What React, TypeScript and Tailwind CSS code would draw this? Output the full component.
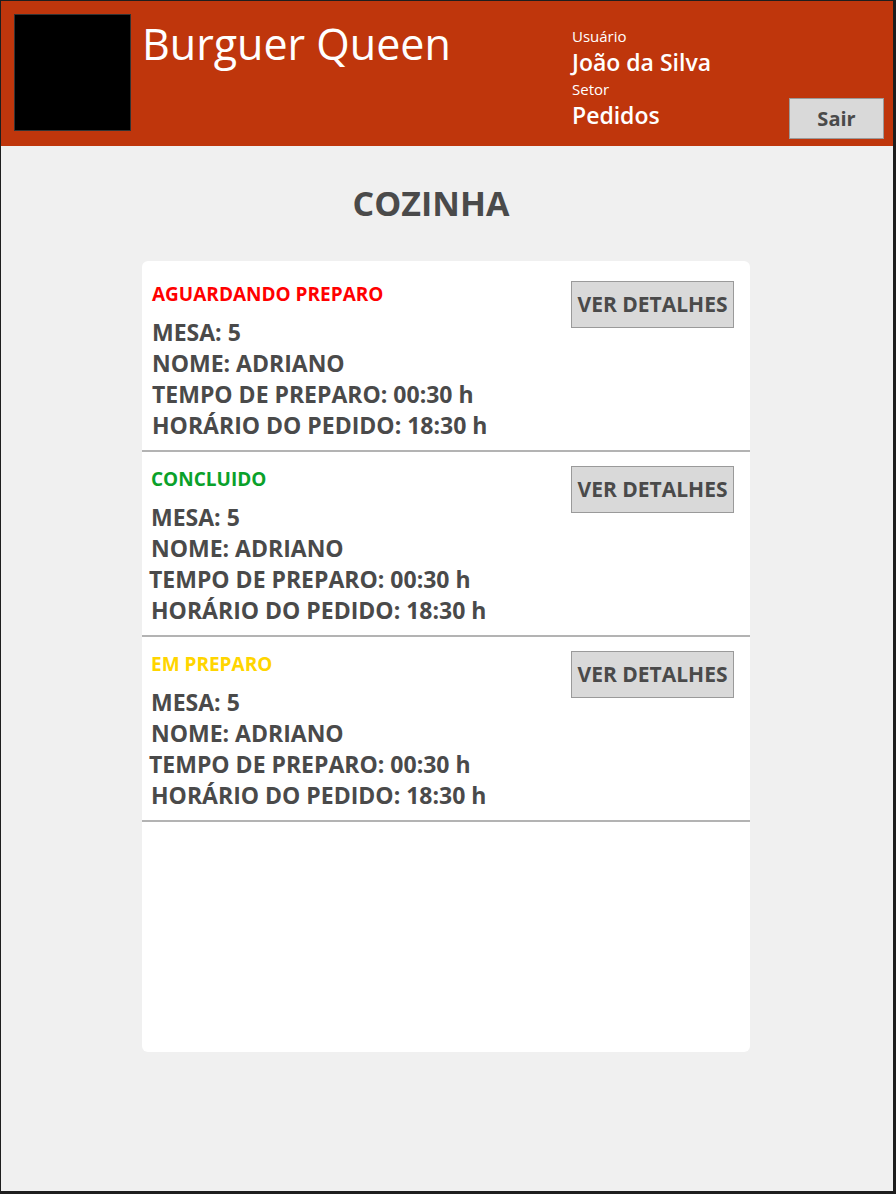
const pedidos = [
  { status: "AGUARDANDO PREPARO", cor: "text-[#ff0000]", first: true },
  { status: "CONCLUIDO", cor: "text-[#0aa12a]", first: false },
  { status: "EM PREPARO", cor: "text-[#ffd500]", first: false },
];

const PedidoRow = ({ status, cor, first }: { status: string; cor: string; first: boolean }) => {
  return (
    <div className="flex items-start justify-between border-b-2 border-[#b3b3b3] pr-[16px]">
      <div
        className={
          first
            ? "pl-[10px] pt-[21px] pb-[9px] text-[#4a4a4a]"
            : "pl-[9px] pt-[15px] pb-[9px] text-[#4a4a4a]"
        }
      >
        <p className={`text-[19px] leading-[24px] font-bold ${cor}`}>{status}</p>
        <div className="mt-[11px] text-[23px] leading-[31px] font-bold">
          <p>MESA: 5</p>
          <p>NOME: ADRIANO</p>
          <p className={first ? "" : "-ml-[2px]"}>TEMPO DE PREPARO: 00:30 h</p>
          <p>HORÁRIO DO PEDIDO: 18:30 h</p>
        </div>
      </div>
      <button
        className={
          first
            ? "mt-[20px] h-[47px] w-[163px] border border-[#9a9a9a] bg-[#d9d9d9] text-[21px] font-bold text-[#4a4a4a]"
            : "mt-[14px] h-[47px] w-[163px] border border-[#9a9a9a] bg-[#d9d9d9] text-[21px] font-bold text-[#4a4a4a]"
        }
      >
        VER DETALHES
      </button>
    </div>
  );
};

export default function App() {
  return (
    <div
      className="flex h-[1194px] w-[896px] flex-col border-t border-l border-r-[3px] border-b-[3px] border-[#1e1e1e] bg-[#f0f0f0]"
      style={{ fontFamily: '"Open Sans", "Noto Sans", sans-serif' }}
    >
      <header className="flex h-[145px] bg-[#bf360c]">
        <div className="ml-[13px] mt-[13px] h-[117px] w-[117px] border border-[#333] bg-black" />
        <div className="ml-[11px] w-[430px] pt-[21px]">
          <h1 className="text-[43px] leading-[43px] text-white">Burguer Queen</h1>
        </div>
        <div className="flex-1 pt-[25px] text-white">
          <p className="text-[15px] leading-[20px]">Usuário</p>
          <p className="text-[23px] leading-[33px] font-semibold">João da Silva</p>
          <p className="text-[15px] leading-[20px]">Setor</p>
          <p className="text-[23px] leading-[33px] font-semibold">Pedidos</p>
        </div>
        <button className="mb-[7px] mr-[9px] h-[41px] w-[95px] self-end border border-[#9a9a9a] bg-[#d9d9d9] text-[20px] font-bold text-[#4a4a4a]">
          Sair
        </button>
      </header>

      <main className="flex flex-col">
        <h2 className="mt-[40px] pr-[32px] text-center text-[34px] leading-[34px] font-bold text-[#4a4a4a]">
          COZINHA
        </h2>
        <section className="ml-[141px] mt-[41px] h-[791px] w-[608px] rounded-md bg-white">
          {pedidos.map((p) => (
            <PedidoRow key={p.status} {...p} />
          ))}
        </section>
      </main>
    </div>
  );
}
